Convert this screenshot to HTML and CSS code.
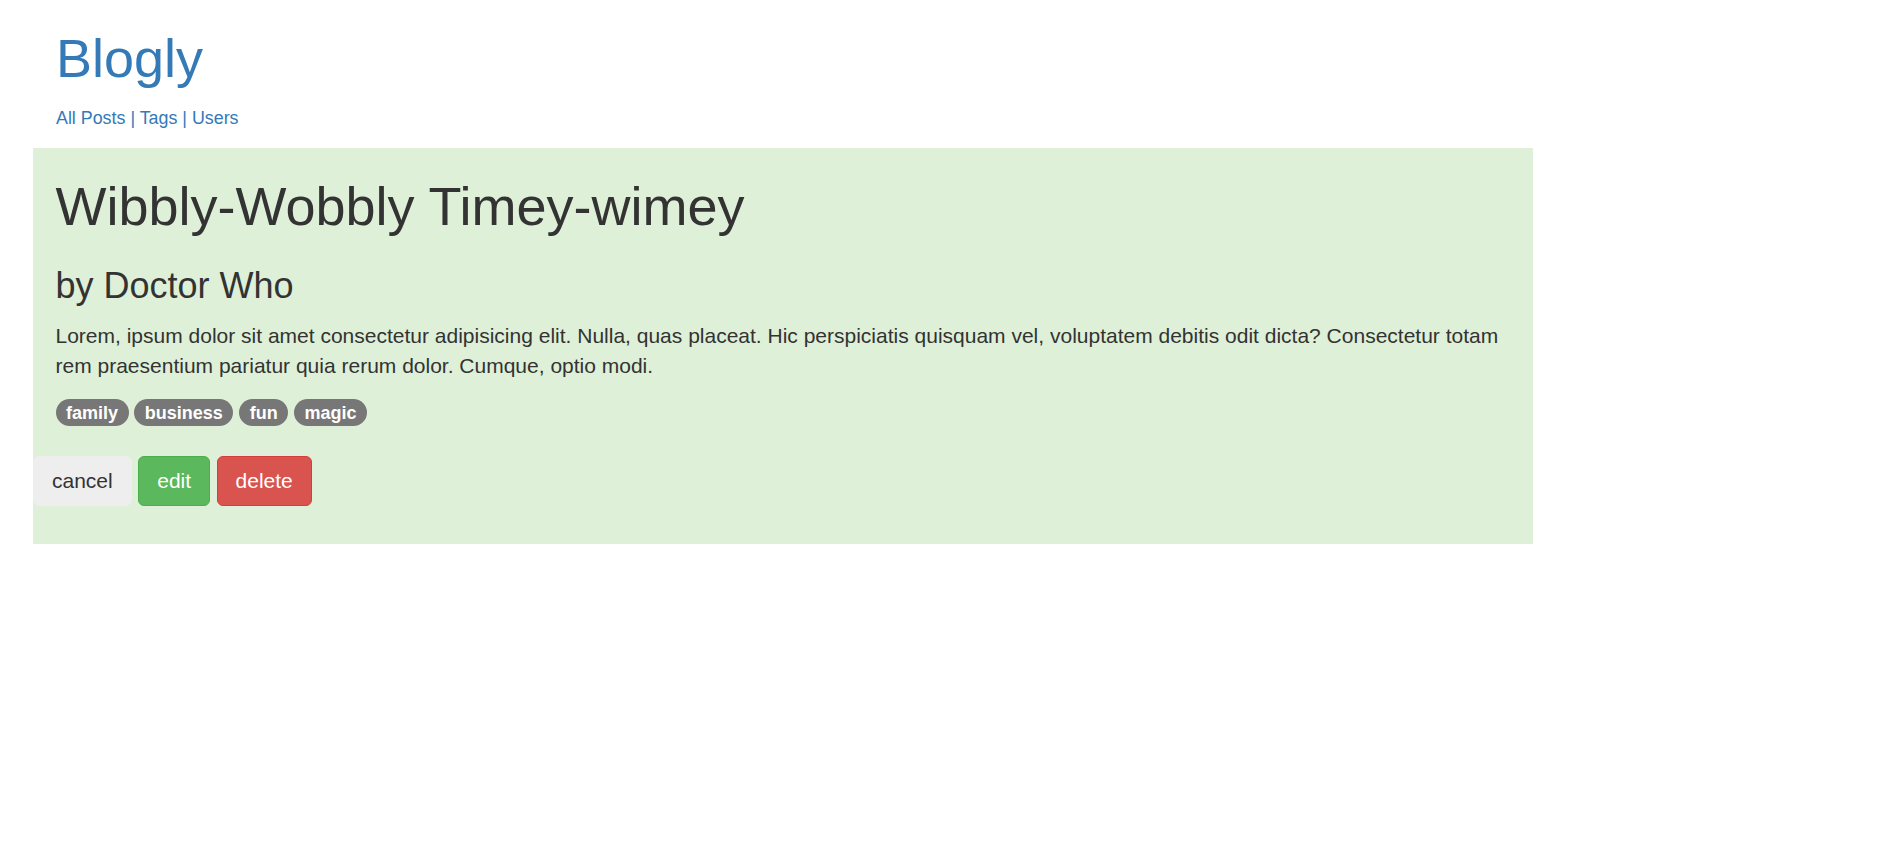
FILE: index.html
```html
<!DOCTYPE html>
<html lang="en">
<head>
<meta charset="utf-8">
<title>Blogly</title>
<link rel="stylesheet" href="styles.css">
</head>
<body>
<div class="page">
  <header class="site-header">
    <h1 class="brand"><a href="#">Blogly</a></h1>
    <p class="nav"><small class="nav-links"><a href="#">All Posts</a> | <a href="#">Tags</a> | <a href="#">Users</a></small></p>
  </header>
  <main class="post">
    <h1 class="post-title">Wibbly-Wobbly Timey-wimey</h1>
    <h3 class="post-author">by Doctor Who</h3>
    <p class="post-body">Lorem, ipsum dolor sit amet consectetur adipisicing elit. Nulla, quas placeat. Hic perspiciatis quisquam vel, voluptatem debitis odit dicta? Consectetur totam rem praesentium pariatur quia rerum dolor. Cumque, optio modi.</p>
    <div class="tags">
      <span class="badge">family</span>
      <span class="badge">business</span>
      <span class="badge">fun</span>
      <span class="badge">magic</span>
    </div>
    <div class="actions">
      <button class="btn btn-cancel">cancel</button>
      <button class="btn btn-edit">edit</button>
      <button class="btn btn-delete">delete</button>
    </div>
  </main>
</div>
</body>
</html>
```
FILE: styles.css
```css
html, body {
  margin: 0;
  padding: 0;
  background: #ffffff;
}
body {
  font-family: "Liberation Sans", Arial, sans-serif;
  font-size: 21px;
  line-height: 30px;
  color: #333333;
}
a {
  color: #337ab7;
  text-decoration: none;
}
.page {
  padding-left: 33px;
  width: 1500px;
}
.site-header {
  padding-left: 23px;
}
.brand {
  margin: 29px 0 14px;
  font-size: 54px;
  line-height: 59.4px;
  font-weight: 400;
}
.nav {
  margin: 0 0 15.6px;
  color: #337ab7;
}
.nav-links {
  font-size: 85%;
  line-height: 1;
}
.post {
  background: #dff0d8;
  padding: 29px 22.5px 38px;
}
.post-title {
  margin: 0 0 30px;
  font-size: 54px;
  line-height: 59.4px;
  font-weight: 400;
}
.post-author {
  margin: 0 0 15px;
  font-size: 36px;
  line-height: 39.6px;
  font-weight: 400;
}
.post-body {
  margin: 0;
}
.tags {
  display: flex;
  gap: 5.8px;
  margin-top: 18px;
}
.badge {
  display: inline-block;
  background: #777777;
  color: #ffffff;
  font-weight: 700;
  font-size: 18px;
  line-height: 18px;
  padding: 4.5px 10.5px;
  border-radius: 15px;
}
.actions {
  display: flex;
  gap: 6.5px;
  margin: 30px 0 0 -22.5px;
}
.btn {
  font-family: "Liberation Sans", Arial, sans-serif;
  font-size: 21px;
  line-height: 30px;
  padding: 9px 18px;
  border: 1.5px solid transparent;
  border-radius: 6px;
  cursor: pointer;
}
.btn-cancel {
  background: #eeeeee;
  border-color: #eeeeee;
  color: #333333;
}
.btn-edit {
  background: #5cb85c;
  border-color: #4cae4c;
  color: #ffffff;
}
.btn-delete {
  background: #d9534f;
  border-color: #d43f3a;
  color: #ffffff;
}
```
